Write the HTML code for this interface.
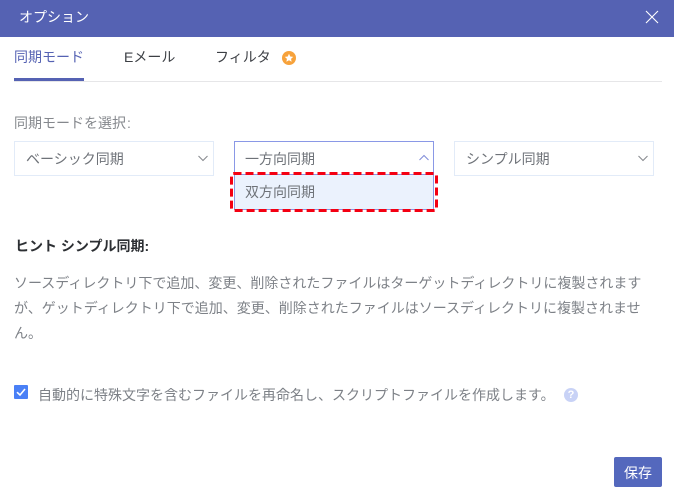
<!DOCTYPE html>
<html lang="ja">
<head>
<meta charset="utf-8">
<style>
html,body{margin:0;padding:0;background:#fff;}
body{width:674px;height:503px;position:relative;overflow:hidden;font-family:"Liberation Sans","Noto Sans CJK JP",sans-serif;font-size:14px;color:#6e7278;}
div,span{position:absolute;white-space:nowrap;box-sizing:border-box;}
svg{position:absolute;}
.t{line-height:20px;}
.sel{top:141px;height:35px;width:200px;border:1px solid #e2ebf8;background:#fff;}
</style>
</head>
<body>
<div style="left:0;top:0;width:674px;height:37px;background:#5562b3;"></div>
<div class="t" style="left:19px;top:7px;color:#fff;font-size:14px;">オプション</div>
<svg style="left:645px;top:10px" width="14" height="14" viewBox="0 0 14 14"><path d="M1 1L13 13M13 1L1 13" stroke="#fff" stroke-width="1.1" fill="none"/></svg>

<div class="t" style="left:14px;top:47px;color:#5562b3;">同期モード</div>
<div class="t" style="left:124px;top:47px;color:#3c3f44;">Eメール</div>
<div class="t" style="left:215px;top:47px;color:#3c3f44;">フィルタ</div>
<svg style="left:282px;top:51px" width="14" height="14" viewBox="0 0 14 14"><circle cx="7" cy="7" r="7" fill="#f7a23b"/><path d="M7 2.8l1.25 2.7 2.95.35-2.15 2 .55 2.9L7 9.3l-2.6 1.45.55-2.9-2.15-2 2.95-.35z" fill="#fff"/></svg>
<div style="left:14px;top:81px;width:648px;height:1px;background:#e6e6e8;"></div>
<div style="left:14px;top:78px;width:70px;height:3px;background:#5562b3;"></div>

<div class="t" style="left:14px;top:113px;color:#85888d;">同期モードを選択<span style="position:static;margin-left:1px;">:</span></div>

<div class="sel" style="left:14px;"></div>
<div class="t" style="left:26px;top:149px;">ベーシック同期</div>
<svg style="left:197px;top:155px" width="12" height="7" viewBox="0 0 12 7"><path d="M1.5 1L6 5.5L10.5 1" stroke="#85888d" stroke-width="1" fill="none"/></svg>

<div class="sel" style="left:234px;width:200px;border-color:#8a98e6;"></div>
<div class="t" style="left:245px;top:149px;">一方向同期</div>
<svg style="left:418px;top:154px" width="12" height="7" viewBox="0 0 12 7"><path d="M1.5 6L6 1.5L10.5 6" stroke="#7f8cd8" stroke-width="1" fill="none"/></svg>

<div class="sel" style="left:454px;"></div>
<div class="t" style="left:466px;top:149px;">シンプル同期</div>
<svg style="left:637px;top:155px" width="12" height="7" viewBox="0 0 12 7"><path d="M1.5 1L6 5.5L10.5 1" stroke="#85888d" stroke-width="1" fill="none"/></svg>

<div style="left:234px;top:174px;width:200px;height:36px;background:#ebf2fd;border:1px solid #8a98e6;"></div>
<svg style="left:228px;top:170px" width="212" height="44" viewBox="0 0 212 44"><rect x="3.5" y="3.5" width="205" height="37" rx="2" fill="none" stroke="#f40012" stroke-width="3" stroke-dasharray="8 4"/></svg>
<div class="t" style="left:245px;top:182px;">双方向同期</div>

<div class="t" style="left:15px;top:236px;color:#2c2f33;font-weight:bold;">ヒント シンプル同期:</div>

<div class="t" style="left:14px;top:273px;color:#7d8187;">ソースディレクトリ下で追加、変更、削除されたファイルはターゲットディレクトリに複製されます</div>
<div class="t" style="left:14px;top:298px;color:#7d8187;">が、ゲットディレクトリ下で追加、変更、削除されたファイルはソースディレクトリに複製されませ</div>
<div class="t" style="left:14px;top:323px;color:#7d8187;">ん。</div>

<div style="left:14px;top:385px;width:14px;height:14px;background:#4a80f6;border-radius:1px;"></div>
<svg style="left:14px;top:385px" width="14" height="14" viewBox="0 0 14 14"><path d="M3 7.2L6 10L11 4" stroke="#fff" stroke-width="1.6" fill="none"/></svg>
<div class="t" style="left:38px;top:385px;color:#7d8187;">自動的に特殊文字を含むファイルを再命名し、スクリプトファイルを作成します。</div>
<div style="left:564px;top:388px;width:14px;height:14px;border-radius:50%;background:#c8d2f6;color:#fff;font-size:11px;line-height:14px;text-align:center;font-weight:bold;">?</div>

<div style="left:614px;top:457px;width:48px;height:30px;background:#5468bd;border-radius:2px;color:#fff;text-align:center;line-height:32px;font-size:14px;">保存</div>
</body>
</html>
